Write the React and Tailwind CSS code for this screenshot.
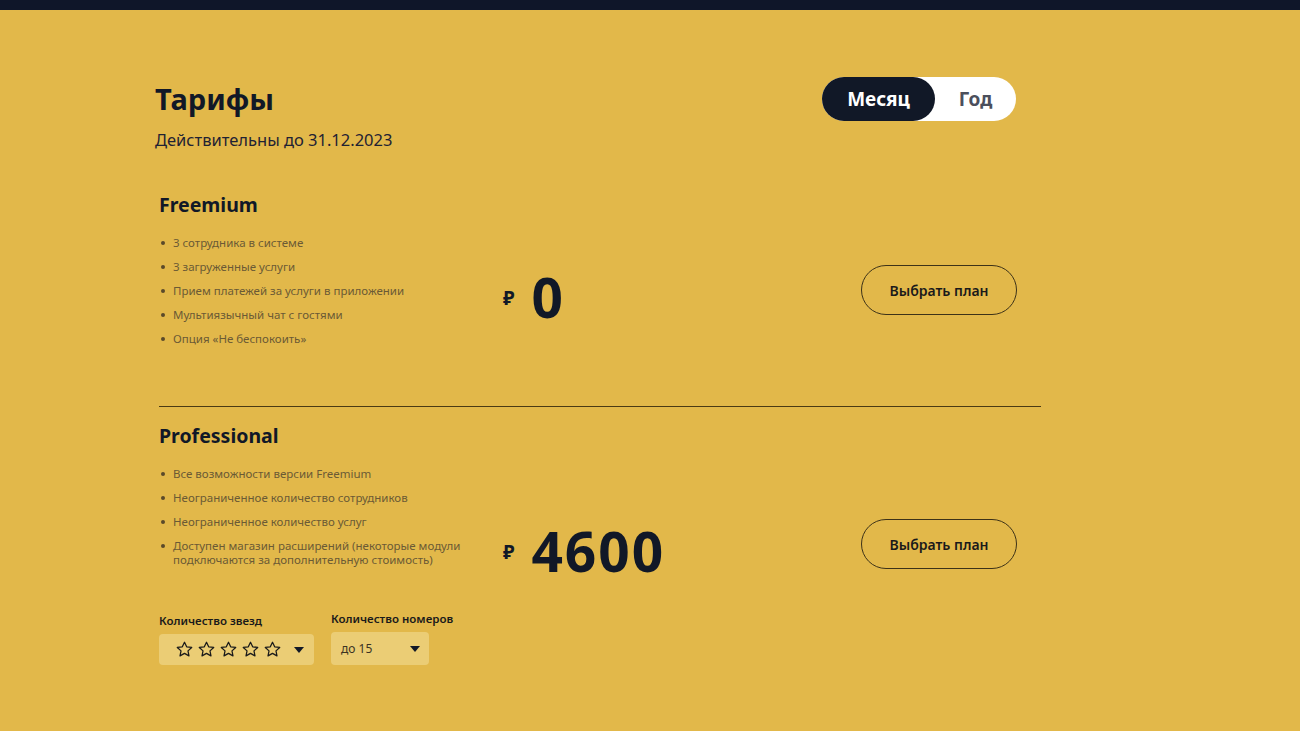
import React from "react";

const font = { fontFamily: '"Noto Sans", "Open Sans", sans-serif' };

function Star() {
  return (
    <svg width="19" height="19" viewBox="0 0 24 24" fill="none" stroke="#1a1a1a" strokeWidth="1.6" strokeLinejoin="round">
      <path d="M12 2.8l2.75 5.85 6.35.75-4.7 4.35 1.25 6.3L12 16.9l-5.65 3.15 1.25-6.3-4.7-4.35 6.35-.75z" />
    </svg>
  );
}

function Caret() {
  return (
    <svg width="10" height="6" viewBox="0 0 10 6" className="shrink-0">
      <path d="M0 0h10L5 6z" fill="#111827" />
    </svg>
  );
}

function Features({ items }) {
  return (
    <ul className="flex flex-col gap-[10px]">
      {items.map((t, i) => (
        <li key={i} className="flex items-start text-[11.5px] leading-[14px] text-[#6b5a35]">
          <span className="w-[14px] shrink-0 flex justify-start pl-[2px] pt-[5px]">
            <span className="block w-[4px] h-[4px] rounded-full bg-[#5a4a2a]" />
          </span>
          <span className="whitespace-pre-line">{t}</span>
        </li>
      ))}
    </ul>
  );
}

function Price({ value }) {
  return (
    <div className="flex items-center flex-1 text-[#111827] pt-[12px]">
      <span className="text-[19px] font-bold mr-[17px] mt-[4px]">₽</span>
      <span className="text-[55px] font-bold leading-none tracking-[2px]">{value}</span>
    </div>
  );
}

function PlanButton() {
  return (
    <button className="w-[156px] h-[50px] rounded-full border border-[#3d3218] text-[14px] font-semibold text-[#1a1a1a] shrink-0">
      Выбрать план
    </button>
  );
}

export default function App() {
  return (
    <div style={font} className="w-[1300px] h-[731px] bg-[#e2b84a] overflow-hidden">
      <div className="h-[10px] bg-[#0f1629]" />
      <div className="pl-[155px] w-[1041px] box-content">
        <div className="w-[886px]">
          <div className="flex items-start justify-between pr-[25px] pt-[67px]">
            <div>
              <h1 className="text-[29px] font-bold text-[#111827] leading-[44px]">Тарифы</h1>
              <p className="text-[16.5px] text-[#1f2233] mt-[8px] leading-[22px]">Действительны до 31.12.2023</p>
            </div>
            <div className="flex items-center bg-white rounded-full h-[44px] w-[194px]">
              <div className="h-[44px] w-[113px] rounded-full bg-[#111827] text-white flex items-center justify-center text-[19px] font-bold">
                Месяц
              </div>
              <div className="flex-1 flex items-center justify-center text-[19px] font-bold text-[#4b4f5c]">
                Год
              </div>
            </div>
          </div>

          <div className="flex items-center pl-[4px] pr-[24px] mt-[41px]">
            <div className="w-[344px] pb-[42px]">
              <h2 className="text-[19.5px] font-bold text-[#111827] leading-[26px]">Freemium</h2>
              <div className="mt-[18px]">
                <Features
                  items={[
                    "3 сотрудника в системе",
                    "3 загруженные услуги",
                    "Прием платежей за услуги в приложении",
                    "Мультиязычный чат с гостями",
                    "Опция «Не беспокоить»",
                  ]}
                />
              </div>
            </div>
            <Price value="0" />
            <PlanButton />
          </div>

          <div className="h-[1px] bg-[#4a3a14] mt-[18px] ml-[4px]" />

          <div className="flex items-center pl-[4px] pr-[24px] mt-[16px]">
            <div className="w-[344px]">
              <h2 className="text-[19.5px] font-bold text-[#111827] leading-[26px]">Professional</h2>
              <div className="mt-[18px]">
                <Features
                  items={[
                    "Все возможности версии Freemium",
                    "Неограниченное количество сотрудников",
                    "Неограниченное количество услуг",
                    "Доступен магазин расширений (некоторые модули\nподключаются за дополнительную стоимость)",
                  ]}
                />
              </div>
              <div className="flex items-end gap-[17px] mt-[44px]">
                <div>
                  <div className="text-[11.5px] font-semibold text-[#1a1a1a] leading-[16px] mb-[5px]">Количество звезд</div>
                  <div className="h-[31px] w-[155px] rounded-[4px] bg-[#ebcd75] flex items-center pl-[16px] pr-[10px]">
                    <div className="flex gap-[3px]">
                      <Star />
                      <Star />
                      <Star />
                      <Star />
                      <Star />
                    </div>
                    <div className="flex-1" />
                    <Caret />
                  </div>
                </div>
                <div>
                  <div className="text-[11.5px] font-semibold text-[#1a1a1a] leading-[16px] mb-[5px]">Количество номеров</div>
                  <div className="h-[33px] w-[98px] rounded-[4px] bg-[#ebcd75] flex items-center pl-[10px] pr-[9px]">
                    <span className="text-[12px] text-[#3b3323]">до 15</span>
                    <div className="flex-1" />
                    <Caret />
                  </div>
                </div>
              </div>
            </div>
            <Price value="4600" />
            <PlanButton />
          </div>
        </div>
      </div>
    </div>
  );
}
